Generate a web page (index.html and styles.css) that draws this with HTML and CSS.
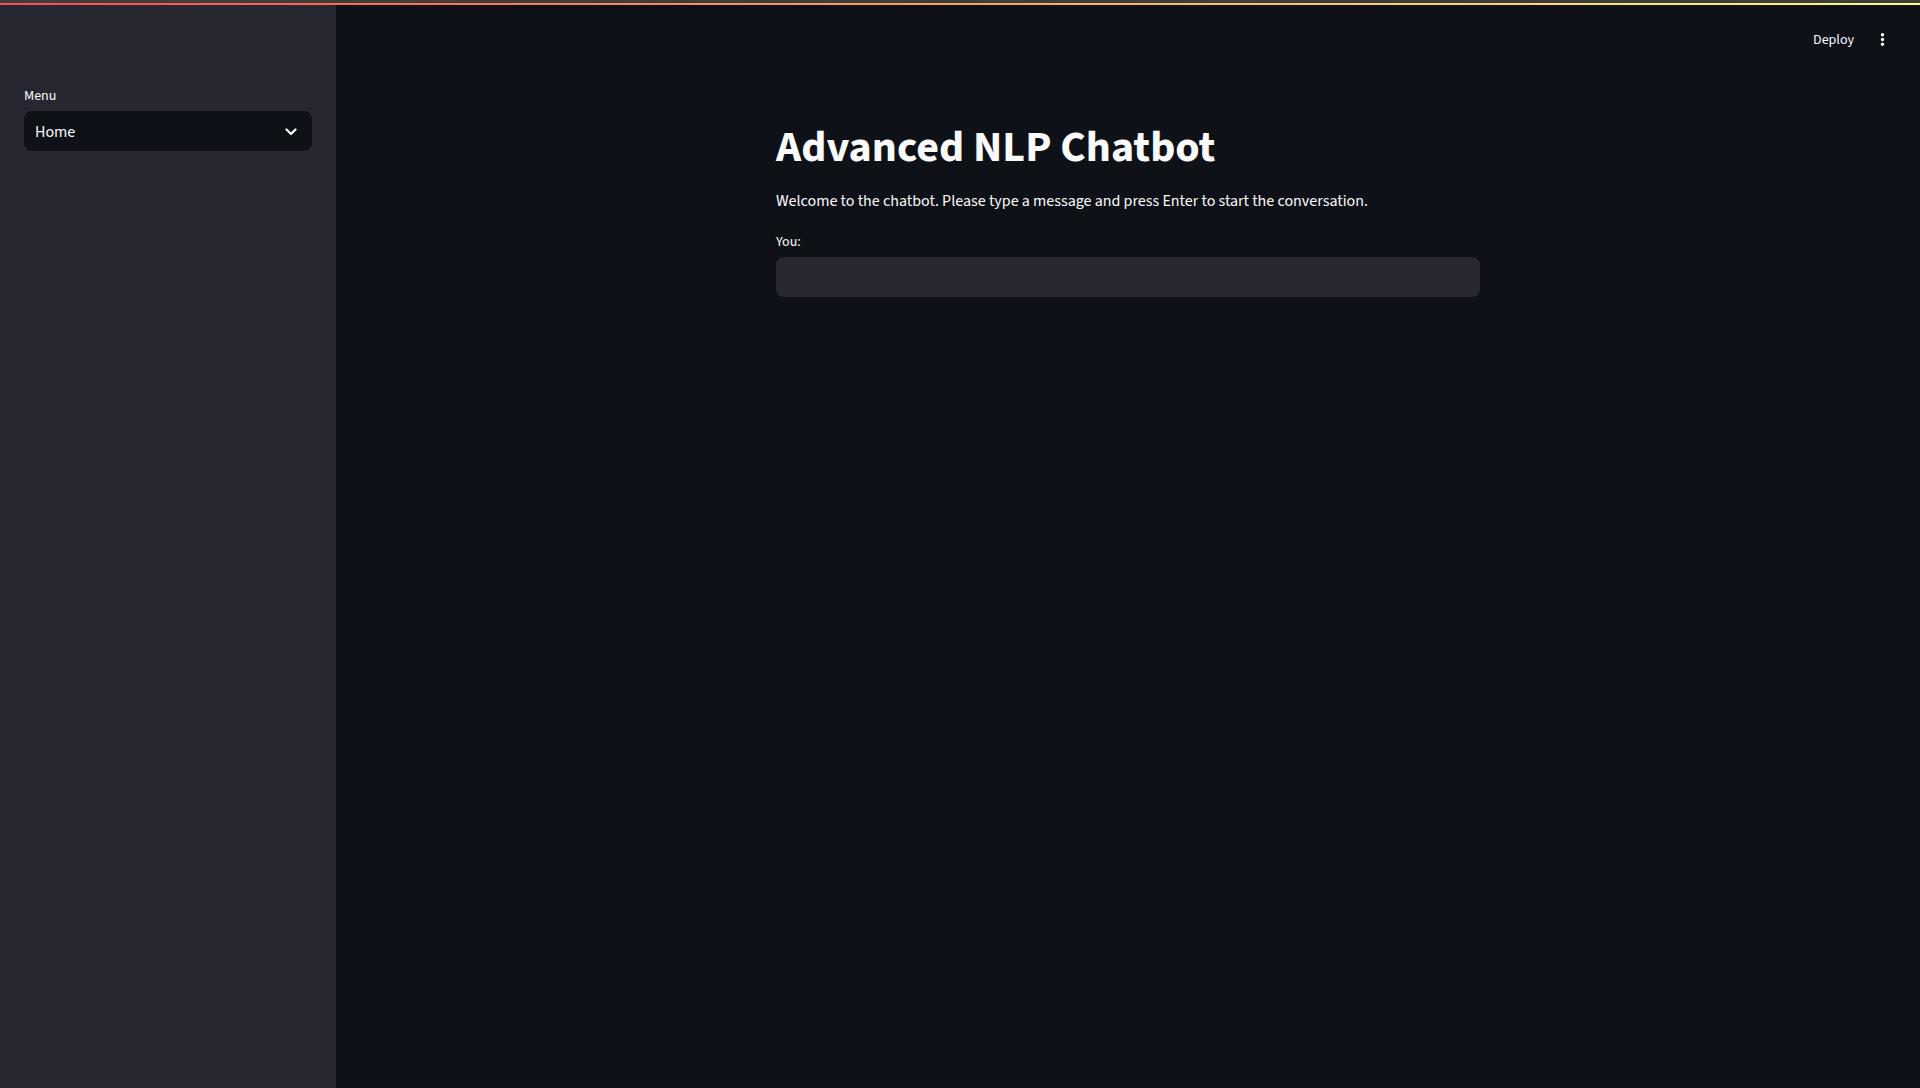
FILE: index.html
```html
<!DOCTYPE html>
<html lang="en">
<head>
<meta charset="utf-8">
<title>Advanced NLP Chatbot</title>
<link rel="stylesheet" href="styles.css">
</head>
<body>
<div class="app">
  <div class="topline"></div>
  <div class="decoration"></div>
  <div class="frame">
    <aside class="sidebar">
      <div class="field-label">Menu</div>
      <div class="select">
        <span class="select-value">Home</span>
        <svg class="chevron" width="12" height="8" viewBox="0 0 12 8" aria-hidden="true">
          <path d="M1.5 1.5 L6 6 L10.5 1.5" fill="none" stroke="#fafafa" stroke-width="2.2" stroke-linecap="round" stroke-linejoin="round"/>
        </svg>
      </div>
    </aside>
    <main class="main">
      <header class="toolbar">
        <span class="deploy">Deploy</span>
        <svg class="kebab" width="19" height="19" viewBox="0 0 24 24" aria-hidden="true">
          <circle cx="12" cy="6" r="2.1" fill="#fafafa"/>
          <circle cx="12" cy="12" r="2.1" fill="#fafafa"/>
          <circle cx="12" cy="18" r="2.1" fill="#fafafa"/>
        </svg>
      </header>
      <section class="block">
        <h1 class="title">Advanced NLP Chatbot</h1>
        <p class="intro">Welcome to the chatbot. Please type a message and press Enter to start the conversation.</p>
        <label class="input-label" for="you">You:</label>
        <input id="you" class="text-input" type="text">
      </section>
    </main>
  </div>
</div>
</body>
</html>
```
FILE: styles.css
```css
html, body {
  margin: 0;
  padding: 0;
  height: 100%;
}
body {
  background: #0e1117;
  color: #fafafa;
  font-family: "Source Sans 3", "Source Sans Pro", "Lato", sans-serif;
  overflow: hidden;
}
.app {
  display: flex;
  flex-direction: column;
  height: 100vh;
}
.topline {
  height: 3px;
  background: #3d3d3d;
  flex: none;
}
.decoration {
  height: 2px;
  flex: none;
  background: linear-gradient(90deg, #ff4b4b, #fffd80);
}
.frame {
  flex: 1;
  display: flex;
  min-height: 0;
}
.sidebar {
  width: 336px;
  flex: none;
  box-sizing: border-box;
  background: #262730;
  padding: 80px 24px 0;
}
.field-label {
  font-size: 14px;
  line-height: 22px;
  margin-bottom: 4px;
  color: #fafafa;
}
.select {
  height: 40px;
  box-sizing: border-box;
  background: #0e1117;
  border-radius: 8px;
  padding: 1px 15px 0 11px;
  display: flex;
  align-items: center;
  justify-content: space-between;
}
.select-value {
  font-size: 16px;
  color: #fafafa;
  padding-top: 1px;
}
.chevron {
  display: block;
}
.main {
  flex: 1;
  display: flex;
  flex-direction: column;
}
.toolbar {
  height: 66px;
  flex: none;
  display: flex;
  justify-content: flex-end;
  align-items: center;
  gap: 19px;
  padding-right: 28px;
}
.deploy {
  font-size: 14px;
  color: #fafafa;
  padding-top: 4px;
}
.kebab {
  display: block;
  margin-top: 2px;
}
.block {
  width: 704px;
  margin: 0 auto;
  padding-top: 51px;
  display: flex;
  flex-direction: column;
}
.title {
  margin: 0;
  font-size: 44px;
  line-height: 52.8px;
  font-weight: 700;
  color: #fafafa;
}
.intro {
  margin: 14px 0 0;
  font-size: 16px;
  line-height: 25.6px;
  color: #fafafa;
}
.input-label {
  margin-top: 17px;
  font-size: 14px;
  line-height: 22.4px;
  color: #fafafa;
}
.text-input {
  margin-top: 3px;
  height: 40px;
  box-sizing: border-box;
  width: 100%;
  border: none;
  outline: none;
  border-radius: 8px;
  background: #262730;
  color: #fafafa;
  font: 16px "Source Sans 3", sans-serif;
  padding: 0 12px;
}
```
